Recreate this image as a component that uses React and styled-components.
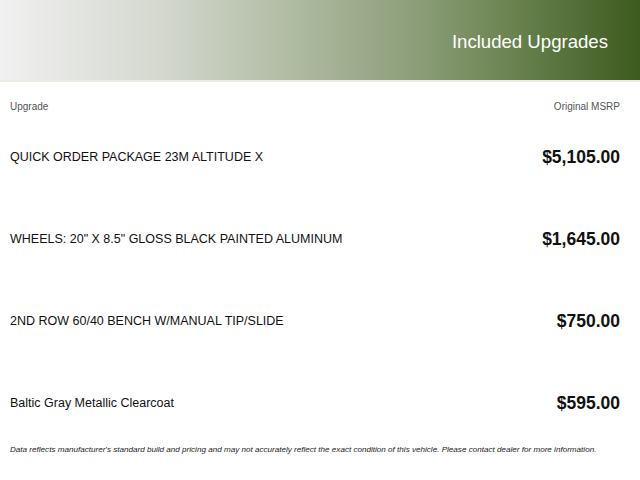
import React from 'react'
import styled, { createGlobalStyle } from 'styled-components'

const GlobalStyle = createGlobalStyle`
  body {
    margin: 0;
    background: #fff;
    font-family: "Liberation Sans", Arial, sans-serif;
  }
`

const Page = styled.div`
  width: 640px;
  min-height: 480px;
  background: #fff;
`

const Banner = styled.header`
  height: 82px;
  display: flex;
  align-items: center;
  justify-content: flex-end;
  padding: 4px 32px 0 0;
  box-sizing: border-box;
  background: linear-gradient(90deg, #f1f1f1 0%, #d4d8cf 25%, #b1bca3 45%, #8c9e79 65%, #6a834f 80%, #3d5a1f 100%);
  border-bottom: 2px solid #e9ede4;
`

const Title = styled.h1`
  margin: 0;
  color: #fff;
  font-size: 18.6px;
  font-weight: 400;
`

const Table = styled.div`
  padding: 0 20px 0 10px;
`

const Labels = styled.div`
  display: flex;
  justify-content: space-between;
  padding-top: 18px;
  height: 34px;
  box-sizing: border-box;
  font-size: 10px;
  color: #555;
  line-height: 14px;
`

const Row = styled.div`
  height: 82px;
  display: flex;
  align-items: center;
  justify-content: space-between;
`

const Name = styled.span`
  font-size: 12.5px;
  color: #111;
`

const Price = styled.span`
  font-size: 17.5px;
  font-weight: 700;
  color: #111;
`

const Note = styled.p`
  margin: 0;
  padding: 0 10px;
  font-size: 8.1px;
  font-style: italic;
  color: #222;
  line-height: 12px;
`

const upgrades = [
  { name: 'QUICK ORDER PACKAGE 23M ALTITUDE X', price: '$5,105.00' },
  { name: 'WHEELS: 20" X 8.5" GLOSS BLACK PAINTED ALUMINUM', price: '$1,645.00' },
  { name: '2ND ROW 60/40 BENCH W/MANUAL TIP/SLIDE', price: '$750.00' },
  { name: 'Baltic Gray Metallic Clearcoat', price: '$595.00' },
]

const App = () => (
  <Page>
    <GlobalStyle />
    <Banner>
      <Title>Included Upgrades</Title>
    </Banner>
    <Table>
      <Labels>
        <span>Upgrade</span>
        <span>Original MSRP</span>
      </Labels>
      {upgrades.map(u => (
        <Row key={u.name}>
          <Name>{u.name}</Name>
          <Price>{u.price}</Price>
        </Row>
      ))}
    </Table>
    <Note>
      Data reflects manufacturer's standard build and pricing and may not accurately reflect the exact condition of this vehicle. Please contact dealer for more information.
    </Note>
  </Page>
)

export default App
